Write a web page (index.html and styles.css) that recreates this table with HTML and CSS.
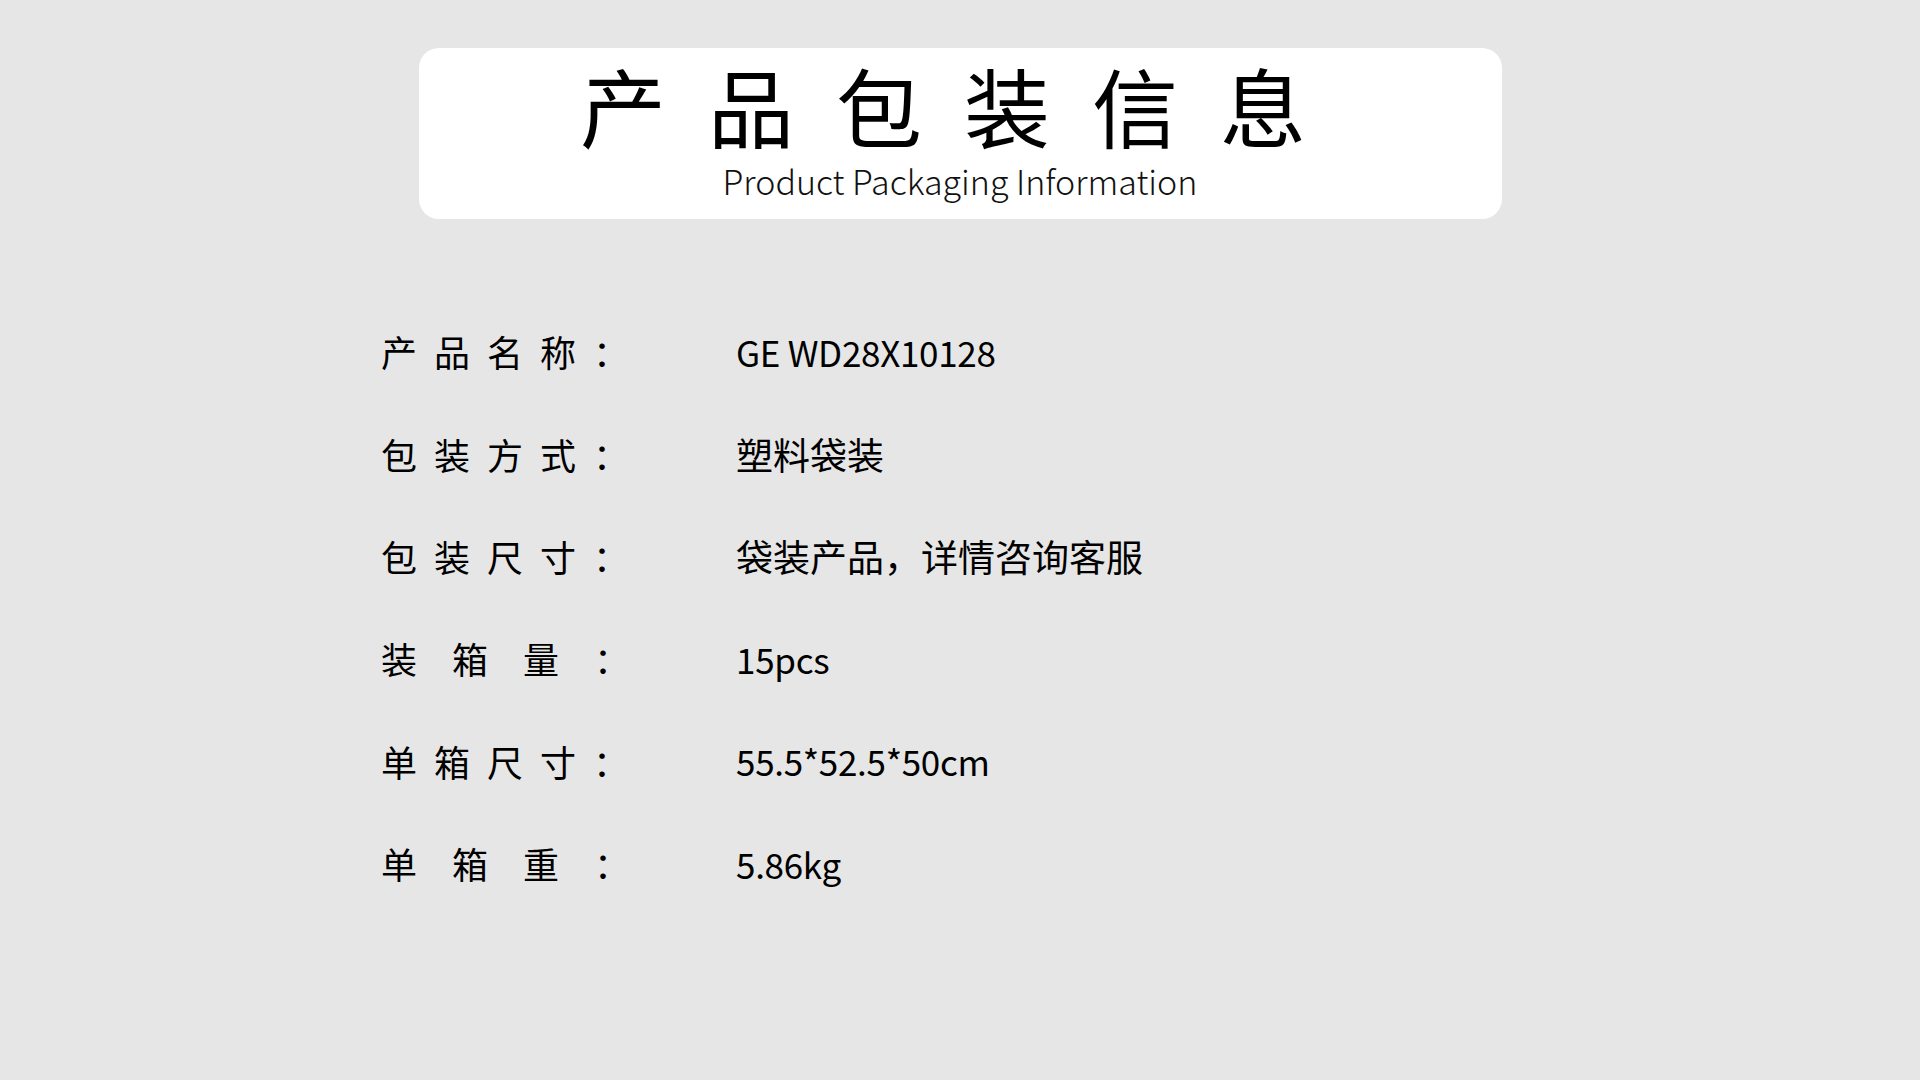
FILE: index.html
```html
<!DOCTYPE html>
<html>
<head>
    <meta charset="utf-8">
    <title>产品包装信息</title>
    <link rel="stylesheet" href="styles.css">
</head>
<body>
    <header class="title-card">
        <h1>产品包装信息</h1>
        <p class="subtitle">Product Packaging Information</p>
    </header>

    <ul class="info-list">
        <li class="info-row"><span class="label">产品名称：</span><span class="value latin">GE WD28X10128</span></li>
        <li class="info-row"><span class="label">包装方式：</span><span class="value">塑料袋装</span></li>
        <li class="info-row"><span class="label">包装尺寸：</span><span class="value">袋装产品，详情咨询客服</span></li>
        <li class="info-row"><span class="label wide">装箱量：</span><span class="value latin">15pcs</span></li>
        <li class="info-row"><span class="label">单箱尺寸：</span><span class="value latin">55.5*52.5*50cm</span></li>
        <li class="info-row"><span class="label wide">单箱重：</span><span class="value latin">5.86kg</span></li>
    </ul>
</body>
</html>
```

FILE: styles.css
```css
* { margin: 0; padding: 0; box-sizing: border-box; }
body {
    font-family: "Noto Sans CJK SC", "Noto Sans", sans-serif;
    background-color: #e6e6e6; color: #000;
    width: 1920px; height: 1080px; overflow: hidden;
}

.title-card {
    width: 1083px; height: 171px; margin: 48px auto 0;
    background: #fff; border-radius: 20px;
    padding-top: 14px; text-align: center;
}
.title-card h1 {
    font-size: 86px; line-height: 86px; font-weight: 400;
    letter-spacing: 42px; padding-left: 8px;
}
.subtitle {
    font-size: 34px; line-height: 40px; font-weight: 300;
    margin-top: 13px; color: #111;
}

.info-list { list-style: none; margin: 81px 0 0 381px; }
.info-row { display: flex; align-items: center; height: 102.4px; }
.label {
    width: 355px; font-size: 36px; font-weight: 400;
    letter-spacing: 17px;
}
.label.wide { letter-spacing: 35px; }
.value { font-size: 37px; font-weight: 400; }
.value.latin { font-size: 35px; letter-spacing: -0.3px; }
```
